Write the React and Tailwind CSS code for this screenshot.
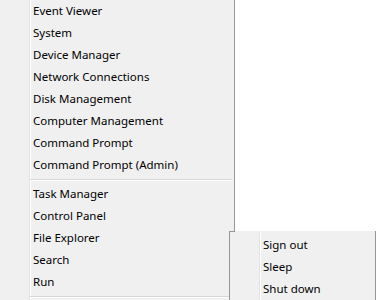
const mainGroups = [
  [
    'Event Viewer',
    'System',
    'Device Manager',
    'Network Connections',
    'Disk Management',
    'Computer Management',
    'Command Prompt',
    'Command Prompt (Admin)',
  ],
  ['Task Manager', 'Control Panel', 'File Explorer', 'Search', 'Run'],
];

const shutdownItems = ['Sign out', 'Sleep', 'Shut down'];

function MenuRow({ label }) {
  return (
    <div className="h-[22px] flex items-center pl-[3px] text-[11.5px] leading-none text-black whitespace-nowrap">
      {label}
    </div>
  );
}

function Separator() {
  return (
    <div className="h-[7px] flex flex-col justify-center mr-[2px]">
      <div className="h-px bg-[#d7d7d7]" />
      <div className="h-px bg-white" />
    </div>
  );
}

export default function App() {
  return (
    <div className="relative w-[376px] h-[300px] bg-white overflow-hidden font-['Segoe_UI','Noto_Sans',sans-serif]">
      {/* win+x menu */}
      <div className="w-[235px] h-full flex bg-[#f0f0f0] border-r border-[#979797]">
        <div className="w-[29px] shrink-0" />
        <div className="flex-1 border-l border-[#e2e3e3] shadow-[inset_1px_0_0_#ffffff]">
          {mainGroups.map((group, i) => (
            <div key={i}>
              {group.map((label) => (
                <MenuRow key={label} label={label} />
              ))}
              <Separator />
            </div>
          ))}
        </div>
      </div>

      {/* shut down or sign out submenu */}
      <div className="absolute left-[229px] top-[231px] w-[147px] h-[80px] flex bg-[#f0f0f0] border-l border-r border-[#979797]">
        <div className="absolute -left-px top-0 w-[6px] h-px bg-[#979797]" />
        <div className="w-[29px] shrink-0" />
        <div className="flex-1 pt-[3px] border-l border-[#e2e3e3] shadow-[inset_1px_0_0_#ffffff]">
          {shutdownItems.map((label) => (
            <MenuRow key={label} label={label} />
          ))}
        </div>
      </div>
    </div>
  );
}
